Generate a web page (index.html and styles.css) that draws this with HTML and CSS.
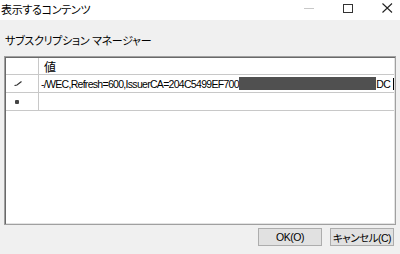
FILE: index.html
```html
<!DOCTYPE html>
<html lang="ja">
<head>
  <meta charset="UTF-8" />
  <title>表示するコンテンツ</title>
  <link rel="stylesheet" href="styles.css">
</head>
<body>
  <div class="window">
    <div class="titlebar">
      <span class="title">表示するコンテンツ</span>
      <div class="controls">
        <span class="ctl ctl-min"></span>
        <span class="ctl ctl-max"></span>
        <svg class="ctl ctl-close" width="11" height="10" viewBox="0 0 11 10">
          <path d="M0.5 0.5 L10 9.5 M10 0.5 L0.5 9.5" stroke="#222" stroke-width="1.1" fill="none" />
        </svg>
      </div>
    </div>

    <div class="content">
      <div class="label">サブスクリプション マネージャー</div>

      <!-- value grid -->
      <div class="grid">
        <div class="row row-head">
          <div class="rh"></div>
          <div class="cell">値</div>
        </div>
        <div class="row">
          <div class="rh">
            <svg width="8" height="5" viewBox="0 0 8 5">
              <path d="M0.5 4.5 L3 4 L7.5 0.5" stroke="#333" stroke-width="1.2" fill="none" />
            </svg>
          </div>
          <div class="cell cell-edit">-/WEC,Refresh=600,IssuerCA=204C5499EF700<span class="redact"></span>DC<span class="caret"></span></div>
        </div>
        <div class="row">
          <div class="rh"><span class="dot"></span></div>
          <div class="cell"></div>
        </div>
        <div class="filler"></div>
      </div>

      <div class="buttons">
        <button type="button">OK(O)</button>
        <button type="button">キャンセル(C)</button>
      </div>
    </div>
  </div>
</body>
</html>
```

FILE: styles.css
```css
:root {
  --face: #f0f0f0;
  --line: #c8c8c8;
  --ui-font: "Liberation Sans", "Noto Sans CJK JP", sans-serif;
}
* {
  box-sizing: border-box;
}
body {
  margin: 0;
  width: 400px;
  height: 254px;
  overflow: hidden;
  font-family: var(--ui-font);
  font-size: 11px;
  color: #000;
  background: var(--face);
}
.window {
  display: flex;
  flex-direction: column;
  height: 254px;
}
/* ---------- TITLE BAR ---------- */
.titlebar {
  height: 20px;
  background: #fff;
  display: flex;
  align-items: center;
  justify-content: space-between;
}
.title {
  padding-left: 1px;
  margin-top: -3px;
  font-size: 11px;
  font-feature-settings: "palt";
  letter-spacing: -0.3px;
}
.controls {
  display: flex;
  align-items: center;
  margin-top: -4px;
}
.ctl {
  display: block;
}
.ctl-min {
  width: 10px;
  height: 1px;
  background: #c8c8c8;
  margin-right: 29px;
}
.ctl-max {
  width: 10px;
  height: 9px;
  border: 1px solid #333;
  margin-right: 29px;
}
.ctl-close {
  margin-right: 7px;
}
/* ---------- CONTENT ---------- */
.content {
  flex: 1;
  display: flex;
  flex-direction: column;
  padding: 0 4px 0 4px;
}
.label {
  margin: 12px 0 0 1px;
  height: 24px;
  font-size: 11px;
  font-feature-settings: "palt";
  letter-spacing: -0.3px;
}
.grid {
  height: 169px;
  background: #fff;
  border: 1px solid #a0a0a0;
  box-shadow: inset 1px 1px 0 #696969, inset -1px -1px 0 #e3e3e3;
  padding: 1px 1px 0 1px;
  display: flex;
  flex-direction: column;
}
.row {
  display: flex;
  height: 18px;
  border-bottom: 1px solid var(--line);
}
.row-head {
  height: 17px;
}
.rh {
  width: 33px;
  border-right: 1px solid var(--line);
  display: flex;
  align-items: center;
  padding-left: 8px;
}
.cell {
  flex: 1;
  display: flex;
  align-items: center;
  padding-left: 2px;
  white-space: nowrap;
  overflow: hidden;
}
.row-head .cell {
  padding-left: 5px;
  font-size: 12px;
}
.cell-edit {
  font-size: 10.5px;
  letter-spacing: -0.7px;
}
.redact {
  display: inline-block;
  width: 142px;
  height: 13px;
  background: #505050;
}
.caret {
  display: inline-block;
  width: 1px;
  height: 12px;
  background: #000;
  margin-left: 3px;
}
.dot {
  width: 4px;
  height: 4px;
  margin-left: 1px;
  background: #444;
  border-radius: 1px;
}
.filler {
  flex: 1;
}
/* ---------- BUTTONS ---------- */
.buttons {
  display: flex;
  justify-content: flex-end;
  gap: 8px;
  padding: 3px 2px 0 0;
}
button {
  width: 64px;
  height: 18px;
  background: #e1e1e1;
  border: 1px solid #adadad;
  font-family: var(--ui-font);
  font-size: 10.5px;
  font-feature-settings: "palt";
  letter-spacing: -0.5px;
  white-space: nowrap;
  padding: 0;
  color: #000;
}
```
